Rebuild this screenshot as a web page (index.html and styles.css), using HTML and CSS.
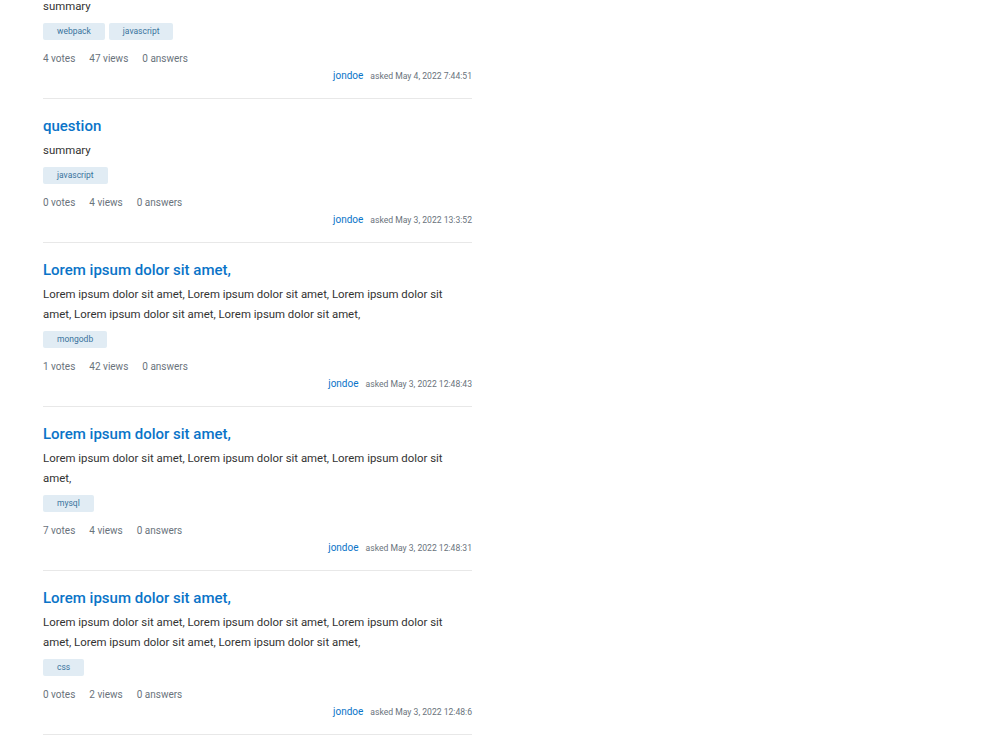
FILE: index.html
```html
<!DOCTYPE html>
<html lang="en">
<head>
    <meta charset="UTF-8">
    <meta name="viewport" content="width=device-width, initial-scale=1.0">
    <title>Questions</title>
    <link rel="stylesheet" href="styles.css">
</head>
<body>
    <div class="question-list">
        <div class="question">
            <a class="question-title" href="#">webpack config</a>
            <p class="question-summary">summary</p>
            <div class="tags">
                <span class="tag">webpack</span>
                <span class="tag">javascript</span>
            </div>
            <div class="stats">
                <span>4 votes</span>
                <span>47 views</span>
                <span>0 answers</span>
            </div>
            <div class="author">
                <a href="#">jondoe</a>
                <span class="asked">asked May 4, 2022 7:44:51</span>
            </div>
        </div>

        <div class="question">
            <a class="question-title" href="#">question</a>
            <p class="question-summary">summary</p>
            <div class="tags">
                <span class="tag">javascript</span>
            </div>
            <div class="stats">
                <span>0 votes</span>
                <span>4 views</span>
                <span>0 answers</span>
            </div>
            <div class="author">
                <a href="#">jondoe</a>
                <span class="asked">asked May 3, 2022 13:3:52</span>
            </div>
        </div>

        <div class="question">
            <a class="question-title" href="#">Lorem ipsum dolor sit amet,</a>
            <p class="question-summary">Lorem ipsum dolor sit amet, Lorem ipsum dolor sit amet, Lorem ipsum dolor sit amet, Lorem ipsum dolor sit amet, Lorem ipsum dolor sit amet,</p>
            <div class="tags">
                <span class="tag">mongodb</span>
            </div>
            <div class="stats">
                <span>1 votes</span>
                <span>42 views</span>
                <span>0 answers</span>
            </div>
            <div class="author">
                <a href="#">jondoe</a>
                <span class="asked">asked May 3, 2022 12:48:43</span>
            </div>
        </div>

        <div class="question">
            <a class="question-title" href="#">Lorem ipsum dolor sit amet,</a>
            <p class="question-summary">Lorem ipsum dolor sit amet, Lorem ipsum dolor sit amet, Lorem ipsum dolor sit amet,</p>
            <div class="tags">
                <span class="tag">mysql</span>
            </div>
            <div class="stats">
                <span>7 votes</span>
                <span>4 views</span>
                <span>0 answers</span>
            </div>
            <div class="author">
                <a href="#">jondoe</a>
                <span class="asked">asked May 3, 2022 12:48:31</span>
            </div>
        </div>

        <div class="question">
            <a class="question-title" href="#">Lorem ipsum dolor sit amet,</a>
            <p class="question-summary">Lorem ipsum dolor sit amet, Lorem ipsum dolor sit amet, Lorem ipsum dolor sit amet, Lorem ipsum dolor sit amet, Lorem ipsum dolor sit amet,</p>
            <div class="tags">
                <span class="tag">css</span>
            </div>
            <div class="stats">
                <span>0 votes</span>
                <span>2 views</span>
                <span>0 answers</span>
            </div>
            <div class="author">
                <a href="#">jondoe</a>
                <span class="asked">asked May 3, 2022 12:48:6</span>
            </div>
        </div>
    </div>
</body>
</html>
```

FILE: styles.css
```css
body {
    font-family: Roboto, 'Helvetica Neue', Arial, sans-serif;
    margin: 0;
    padding: 0;
    background-color: #ffffff;
    color: #333;
    overflow: hidden;
}
/* list is scrolled a bit, first question starts above the fold */
.question-list {
    width: 429px;
    margin: -45px 0 0 43px;
}
.question {
    padding: 15px 0 15px;
    border-bottom: 1px solid #e8e8e8;
}
.question-title {
    display: block;
    font-size: 15px;
    line-height: 24px;
    font-weight: 500;
    color: #0a74c8;
    text-decoration: none;
}
.question-summary {
    margin: 2px 0 0;
    font-size: 11.4px;
    line-height: 20px;
    color: #333;
}
.tags {
    display: flex;
    gap: 4px;
    margin-top: 7px;
}
.tag {
    padding: 0 14px;
    height: 17px;
    line-height: 17px;
    font-size: 8.5px;
    color: #39739d;
    background-color: #e1ecf4;
    border-radius: 2px;
}
.stats {
    display: flex;
    gap: 14px;
    margin-top: 9px;
    font-size: 10px;
    line-height: 20px;
    color: #6a737c;
}
.author {
    display: flex;
    justify-content: flex-end;
    align-items: baseline;
    gap: 7px;
    line-height: 14px;
}
.author a {
    font-size: 10px;
    color: #0a74c8;
    text-decoration: none;
}
.asked {
    font-size: 8.6px;
    color: #6a737c;
}
```
